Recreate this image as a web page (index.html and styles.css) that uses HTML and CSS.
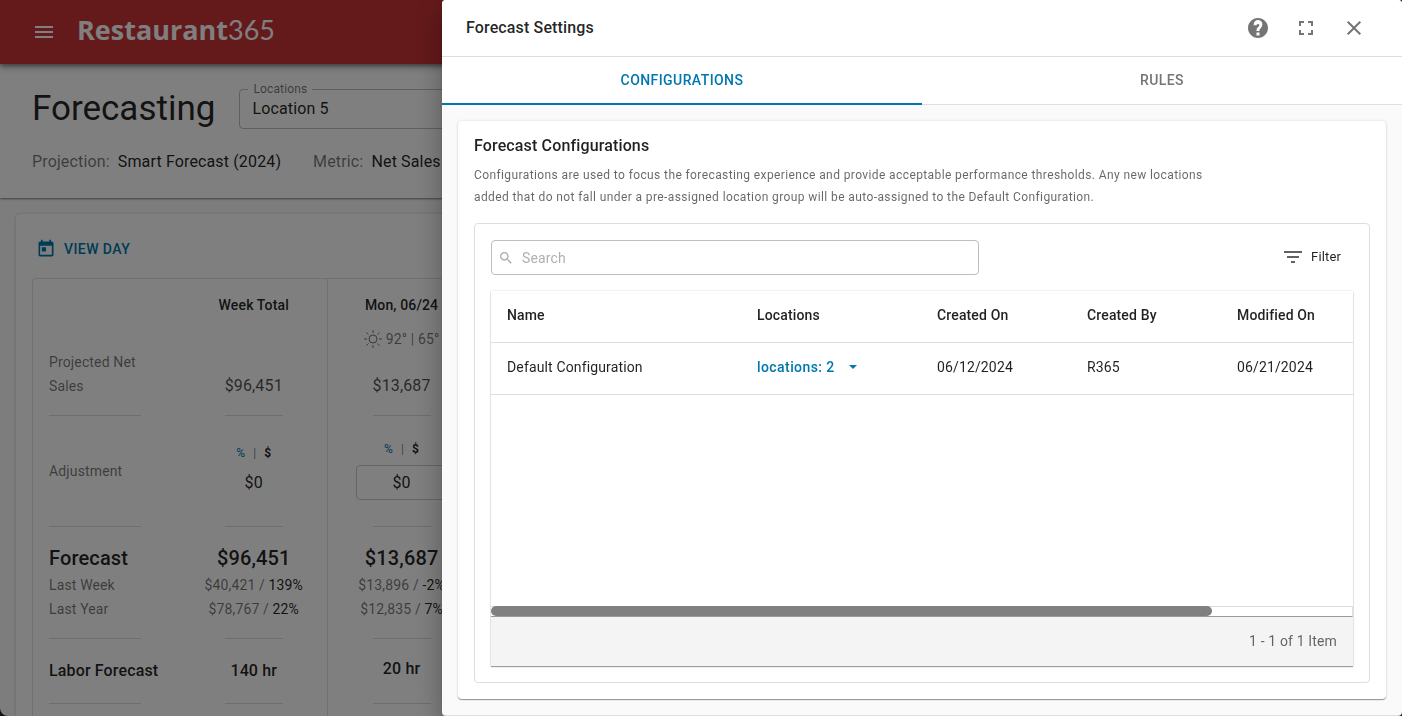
FILE: index.html
```html
<!DOCTYPE html>
<html lang="en">
<head>
    <meta charset="UTF-8">
    <meta name="viewport" content="width=device-width, initial-scale=1.0">
    <title>Forecast Settings</title>
    <link rel="stylesheet" href="styles.css">
</head>
<body>
    <div class="page">
        <header class="topbar">
            <button class="icon-btn" type="button" aria-label="Menu">
                <svg width="24" height="24" viewBox="0 0 24 24"><path d="M3 18h18v-2H3v2zm0-5h18v-2H3v2zm0-7v2h18V6H3z"/></svg>
            </button>
            <div class="logo"><b>Restaurant</b><span>365</span></div>
        </header>

        <section class="subheader">
            <div class="title-row">
                <h1>Forecasting</h1>
                <div class="field">
                    <label for="location">Locations</label>
                    <select id="location"><option>Location 5</option></select>
                </div>
            </div>
            <div class="meta">
                <div><span class="muted">Projection:</span> Smart Forecast (2024)</div>
                <div><span class="muted">Metric:</span> Net Sales</div>
            </div>
        </section>

        <main class="sheet">
            <button class="view-day" type="button">
                <svg width="24" height="24" viewBox="0 0 24 24"><path d="M19 3h-1V1h-2v2H8V1H6v2H5c-1.11 0-1.99.9-1.99 2L3 19c0 1.1.89 2 2 2h14c1.1 0 2-.9 2-2V5c0-1.1-.9-2-2-2zm0 16H5V8h14v11zM7 10h5v5H7z"/></svg>
                VIEW DAY
            </button>
            <div class="table-wrap">
                <table class="forecast">
                    <tr class="row-head">
                        <th></th>
                        <th>Week Total</th>
                        <th>
                            Mon, 06/24
                            <div class="weather">
                                <svg width="18" height="18" viewBox="0 0 18 18"><circle cx="9" cy="9" r="4"/><path d="M9 0v3M9 15v3M0 9h3M15 9h3M2.5 2.5l2 2M13.500 13.500l2 2M2.500 15.500l2-2M13.500 4.500l2-2"/></svg>
                                92° | 65°
                            </div>
                        </th>
                    </tr>
                    <tr class="row-net">
                        <td><div class="cell">Projected Net Sales</div></td>
                        <td><div class="cell amount">$96,451</div></td>
                        <td><div class="cell amount">$13,687</div></td>
                    </tr>
                    <tr class="row-adjust">
                        <td><div class="cell">Adjustment</div></td>
                        <td>
                            <div class="cell">
                                <div class="unit"><a href="#">%</a><i>|</i><b>$</b></div>
                                <div class="value">$0</div>
                            </div>
                        </td>
                        <td>
                            <div class="cell day">
                                <div class="unit"><a href="#">%</a><i>|</i><b>$</b></div>
                                <input class="adjust" type="text" value="$0" aria-label="Adjustment for Monday">
                            </div>
                        </td>
                    </tr>
                    <tr class="row-forecast">
                        <td><div class="cell"><strong>Forecast</strong><span>Last Week</span><span>Last Year</span></div></td>
                        <td><div class="cell"><strong>$96,451</strong><span>$40,421 / <em>139%</em></span><span>$78,767 / <em>22%</em></span></div></td>
                        <td><div class="cell"><strong>$13,687</strong><span>$13,896 / <em>-2%</em></span><span>$12,835 / <em>7%</em></span></div></td>
                    </tr>
                    <tr class="row-labor">
                        <td><div class="cell">Labor Forecast</div></td>
                        <td><div class="cell">140 hr</div></td>
                        <td><div class="cell day">20 hr</div></td>
                    </tr>
                    <tr class="row-next">
                        <td></td>
                        <td></td>
                        <td></td>
                    </tr>
                </table>
            </div>
        </main>
    </div>

    <div class="backdrop"></div>

    <aside class="drawer">
        <header class="drawer-head">
            <h2>Forecast Settings</h2>
            <button class="icon-btn" type="button" aria-label="Help">
                <svg width="24" height="24" viewBox="0 0 24 24"><path d="M12 2C6.480 2 2 6.480 2 12s4.480 10 10 10 10-4.480 10-10S17.520 2 12 2zm1.500 17.500h-3v-3h3v3zm1.800-7.900l-.9.920c-.7.700-.9 1.200-.9 2.480h-3v-.6c0-1.200.5-2.200 1.200-2.900l1.200-1.200c.3-.3.400-.6.400-1 0-.8-.6-1.400-1.300-1.400s-1.400.6-1.400 1.400H7.600C7.600 5.900 9.600 4 12 4s4.400 1.900 4.400 4.200c0 1.300-.4 2.500-1.100 3.400z"/></svg>
            </button>
            <button class="icon-btn" type="button" aria-label="Full screen">
                <svg width="24" height="24" viewBox="0 0 24 24"><path d="M7 14H5v5h5v-2H7v-3zm-2-4h2V7h3V5H5v5zm12 7h-3v2h5v-5h-2v3zM14 5v2h3v3h2V5h-5z"/></svg>
            </button>
            <button class="icon-btn" type="button" aria-label="Close">
                <svg width="24" height="24" viewBox="0 0 24 24"><path d="M19 6.410L17.590 5 12 10.590 6.410 5 5 6.410 10.590 12 5 17.590 6.410 19 12 13.410 17.590 19 19 17.590 13.410 12z"/></svg>
            </button>
        </header>
        <nav class="tabs">
            <button class="tab active" type="button">CONFIGURATIONS</button>
            <button class="tab" type="button">RULES</button>
        </nav>
        <div class="drawer-body">
            <section class="card">
                <h3>Forecast Configurations</h3>
                <p>Configurations are used to focus the forecasting experience and provide acceptable performance thresholds. Any new locations added that do not fall under a pre-assigned location group will be auto-assigned to the Default Configuration.</p>
                <div class="panel">
                    <div class="tools">
                        <label class="search">
                            <svg width="16" height="16" viewBox="0 0 24 24"><path d="M15.500 14h-.79l-.28-.27C15.410 12.590 16 11.110 16 9.500 16 5.910 13.090 3 9.500 3S3 5.910 3 9.500 5.910 16 9.500 16c1.610 0 3.090-.59 4.230-1.570l.27.28v.79l5 4.990L20.490 19l-4.990-5zm-6 0C7.010 14 5 11.990 5 9.500S7.010 5 9.500 5 14 7.010 14 9.500 11.990 14 9.500 14z"/></svg>
                            <input type="text" placeholder="Search" aria-label="Search">
                        </label>
                        <button class="filter" type="button">
                            <svg width="24" height="24" viewBox="0 0 24 24"><path d="M10 18h4v-2h-4v2zM3 6v2h18V6H3zm3 7h12v-2H6v2z"/></svg>
                            Filter
                        </button>
                    </div>
                    <div class="grid">
                        <div class="grid-body">
                            <table>
                                <thead>
                                    <tr>
                                        <th class="col-name">Name</th>
                                        <th class="col-locations">Locations</th>
                                        <th class="col-date">Created On</th>
                                        <th class="col-date">Created By</th>
                                        <th>Modified On</th>
                                    </tr>
                                </thead>
                                <tbody>
                                    <tr>
                                        <td>Default Configuration</td>
                                        <td>
                                            <button class="locations" type="button">
                                                locations: 2
                                                <svg width="8" height="4" viewBox="0 0 8 4"><path d="M0 0h8L4 4z"/></svg>
                                            </button>
                                        </td>
                                        <td>06/12/2024</td>
                                        <td>R365</td>
                                        <td>06/21/2024</td>
                                    </tr>
                                </tbody>
                            </table>
                        </div>
                        <div class="scrollbar"><div class="thumb"></div></div>
                        <div class="pager">1 - 1 of 1 Item</div>
                    </div>
                </div>
            </section>
        </div>
    </aside>
</body>
</html>
```

FILE: styles.css
```css
* {
    box-sizing: border-box;
}

html, body {
    height: 100%;
    margin: 0;
}

body {
    background: #222;
    font-family: Roboto, sans-serif;
    font-size: 14px;
    line-height: 24px;
    letter-spacing: 0.01em;
    color: rgba(0, 0, 0, 0.87);
    overflow: hidden;
}

h1, h2, h3, p {
    margin: 0;
}

button, input, select {
    font: inherit;
    letter-spacing: inherit;
    color: inherit;
    background: none;
    border: 0;
    padding: 0;
}

svg {
    display: block;
    flex: none;
    fill: currentColor;
}

.icon-btn {
    display: flex;
    align-items: center;
    justify-content: center;
    width: 48px;
    height: 48px;
}

/* page behind the drawer */
.page {
    height: 100%;
    overflow: hidden;
    background: #fafafa;
    border-radius: 0 0 8px 8px;
}

.topbar {
    position: relative;
    display: flex;
    align-items: center;
    height: 64px;
    padding-left: 20px;
    background: #c83434;
    color: #fff;
    box-shadow: 0 2px 4px rgba(0, 0, 0, 0.4), 0 4px 8px rgba(0, 0, 0, 0.2);
}

.logo {
    display: flex;
    align-items: baseline;
    margin-left: 9px;
    padding-bottom: 4px;
    font-size: 27px;
    letter-spacing: normal;
}

.logo b {
    font-family: "Open Sans", sans-serif;
    font-weight: 700;
}

.logo span {
    font-family: Lato, sans-serif;
    font-weight: 400;
}

.subheader {
    height: 134px;
    padding: 25px 32px 0;
    background: #fff;
    box-shadow: 0 1px 2px rgba(0, 0, 0, 0.5);
}

.title-row {
    display: flex;
    align-items: center;
    gap: 24px;
    height: 40px;
}

h1 {
    font-size: 35px;
    font-weight: 400;
    letter-spacing: normal;
}

.field {
    position: relative;
    width: 320px;
    height: 40px;
}

.field label {
    position: absolute;
    top: -8px;
    left: 9px;
    padding: 0 5px;
    background: #fff;
    font-size: 12px;
    line-height: 16px;
    color: rgba(0, 0, 0, 0.54);
}

.field select {
    appearance: none;
    width: 100%;
    height: 100%;
    padding: 0 12px;
    border: 1px solid rgba(0, 0, 0, 0.25);
    border-radius: 4px;
    font-size: 16px;
}

.meta {
    display: flex;
    gap: 32px;
    margin-top: 21px;
    font-size: 16px;
    white-space: nowrap;
}

.muted {
    margin-right: 4px;
    color: rgba(0, 0, 0, 0.54);
}

.sheet {
    height: 100%;
    margin: 16px;
    padding: 17px 16px 0;
    background: #fff;
    border-radius: 4px;
    box-shadow: 0 0 3px rgba(0, 0, 0, 0.2);
}

.view-day {
    display: flex;
    align-items: center;
    gap: 8px;
    height: 36px;
    padding-left: 4px;
    font-weight: 500;
    letter-spacing: 0.03em;
    color: #0077ae;
}

.view-day svg {
    width: 20px;
    height: 20px;
}

.table-wrap {
    margin-top: 11px;
    overflow: hidden;
    border: 1px solid #e0e0e0;
    border-radius: 4px;
}

.forecast {
    width: 442px;
    table-layout: fixed;
    border-collapse: collapse;
}

.forecast th,
.forecast td {
    padding: 0;
    text-align: center;
}

.forecast th:nth-child(2),
.forecast td:nth-child(2) {
    border-right: 1px solid #e0e0e0;
}

.row-head th {
    height: 71px;
    padding-top: 14px;
    vertical-align: top;
    font-weight: 500;
}

.weather {
    display: flex;
    align-items: center;
    justify-content: center;
    gap: 4px;
    height: 23px;
    margin-top: 10px;
    font-weight: 400;
    color: rgba(0, 0, 0, 0.54);
    white-space: nowrap;
}

.weather svg {
    fill: none;
    stroke: currentColor;
}

.cell {
    display: flex;
    flex-direction: column;
    align-items: center;
    justify-content: center;
    width: 58px;
    margin: 0 auto;
    border-bottom: 1px solid #dcdcdc;
    white-space: nowrap;
}

td:first-child .cell {
    align-items: flex-start;
    width: 92px;
    margin: 0 16px;
    text-align: left;
    color: rgba(0, 0, 0, 0.54);
}

.row-net .cell {
    justify-content: flex-end;
    height: 66px;
    padding-bottom: 17px;
    white-space: normal;
}

.amount {
    font-size: 16px;
    color: rgba(0, 0, 0, 0.7);
}

.row-adjust .cell {
    height: 111px;
}

.unit {
    display: flex;
    gap: 8px;
    font-size: 12px;
}

.unit a {
    color: #0077ae;
    text-decoration: none;
}

.unit i {
    font-style: normal;
    color: rgba(0, 0, 0, 0.54);
}

.unit b {
    font-weight: 700;
}

.value {
    font-size: 16px;
    line-height: 36px;
}

.adjust {
    width: 92px;
    height: 35px;
    margin-top: 4px;
    border: 1px solid #ccc;
    border-radius: 4px;
    font-size: 16px;
    text-align: center;
}

.row-forecast .cell {
    justify-content: flex-end;
    height: 112px;
    padding-bottom: 17px;
}

.row-forecast strong {
    font-size: 20px;
    font-weight: 500;
    line-height: 30px;
    color: rgba(0, 0, 0, 0.87);
}

.row-forecast span {
    color: rgba(0, 0, 0, 0.54);
}

.row-forecast em {
    font-style: normal;
    color: rgba(0, 0, 0, 0.87);
}

.row-labor td .cell {
    height: 65px;
    font-size: 16px;
    font-weight: 500;
    color: rgba(0, 0, 0, 0.87);
}

.cell.day {
    padding-bottom: 5px;
}

.row-next td {
    height: 64px;
}

/* drawer */
.backdrop {
    position: fixed;
    inset: 0;
    background: rgba(0, 0, 0, 0.5);
}

.drawer {
    position: fixed;
    top: 0;
    right: 0;
    bottom: 0;
    display: flex;
    flex-direction: column;
    width: 960px;
    max-width: 100%;
    overflow: hidden;
    background: #fafafa;
    border-bottom: 1px solid #dedede;
    border-radius: 4px;
    box-shadow: 0 8px 10px -5px rgba(0, 0, 0, 0.2), 0 16px 24px 2px rgba(0, 0, 0, 0.14), 0 6px 30px 5px rgba(0, 0, 0, 0.12);
}

.drawer-head {
    display: flex;
    align-items: center;
    height: 57px;
    padding: 0 24px;
    background: #fff;
    border-bottom: 1px solid #dedede;
}

.drawer-head h2 {
    flex: 1;
    font-size: 16px;
    font-weight: 500;
}

.drawer-head .icon-btn {
    color: #757575;
}

.tabs {
    display: flex;
    height: 48px;
    background: #fff;
    border-bottom: 1px solid #dedede;
}

.tab {
    flex: 1;
    height: 48px;
    border-bottom: 2px solid transparent;
    font-weight: 500;
    letter-spacing: 0.03em;
    color: #757575;
}

.tab.active {
    border-color: #0077ae;
    color: #0077ae;
}

.drawer-body {
    display: flex;
    flex: 1;
    padding: 16px;
}

.card {
    display: flex;
    flex: 1;
    flex-direction: column;
    padding: 13px 16px 16px;
    background: #fff;
    border-radius: 4px;
    box-shadow: 0 1px 1px rgba(0, 0, 0, 0.4), 0 0 3px rgba(0, 0, 0, 0.12);
}

.card h3 {
    font-size: 16px;
    font-weight: 500;
}

.card p {
    max-width: 750px;
    margin: 6px 0 15px;
    font-size: 12px;
    line-height: 22px;
    letter-spacing: 0.033em;
    color: rgba(0, 0, 0, 0.6);
}

.panel {
    display: flex;
    flex: 1;
    flex-direction: column;
    padding: 16px;
    border: 1px solid #dedede;
    border-radius: 4px;
}

.tools {
    display: flex;
    justify-content: space-between;
    margin-bottom: 16px;
}

.search {
    display: flex;
    align-items: center;
    gap: 8px;
    width: 488px;
    height: 35px;
    padding: 0 6px;
    border: 1px solid #bdbdbd;
    border-radius: 4px;
    color: #aaa;
}

.search input {
    flex: 1;
    outline: 0;
    color: #222;
}

.search input::placeholder {
    color: #b0b0b0;
}

.filter {
    display: flex;
    align-items: center;
    gap: 6px;
    height: 33px;
    padding-right: 12px;
    font-size: 13px;
}

.filter svg {
    color: #616161;
}

.grid {
    display: flex;
    flex: 1;
    flex-direction: column;
    box-shadow: 0 1px 1px rgba(0, 0, 0, 0.35), 0 0 2px rgba(0, 0, 0, 0.15);
}

.grid-body {
    flex: 1;
}

.grid table {
    width: 100%;
    table-layout: fixed;
    border-collapse: collapse;
}

.grid th,
.grid td {
    height: 52px;
    padding: 0 16px 3px;
    border-bottom: 1px solid #dedede;
    text-align: left;
    white-space: nowrap;
}

.grid th {
    height: 51px;
    font-weight: 500;
}

.col-name {
    width: 250px;
}

.col-locations {
    width: 180px;
}

.col-date {
    width: 150px;
}

.locations {
    display: flex;
    align-items: center;
    gap: 14px;
    font-weight: 500;
    letter-spacing: 0.03em;
    color: #0077ae;
}

.scrollbar {
    height: 11px;
    border: 1px solid #dedede;
    border-left: 0;
    border-bottom-color: #999;
}

.thumb {
    width: 83.7%;
    height: 10px;
    margin-top: -1px;
    border-radius: 5px;
    background: #808080;
}

.pager {
    height: 49px;
    padding: 0 16px;
    background: #f4f4f4;
    line-height: 48px;
    text-align: right;
    color: rgba(0, 0, 0, 0.6);
}
```
